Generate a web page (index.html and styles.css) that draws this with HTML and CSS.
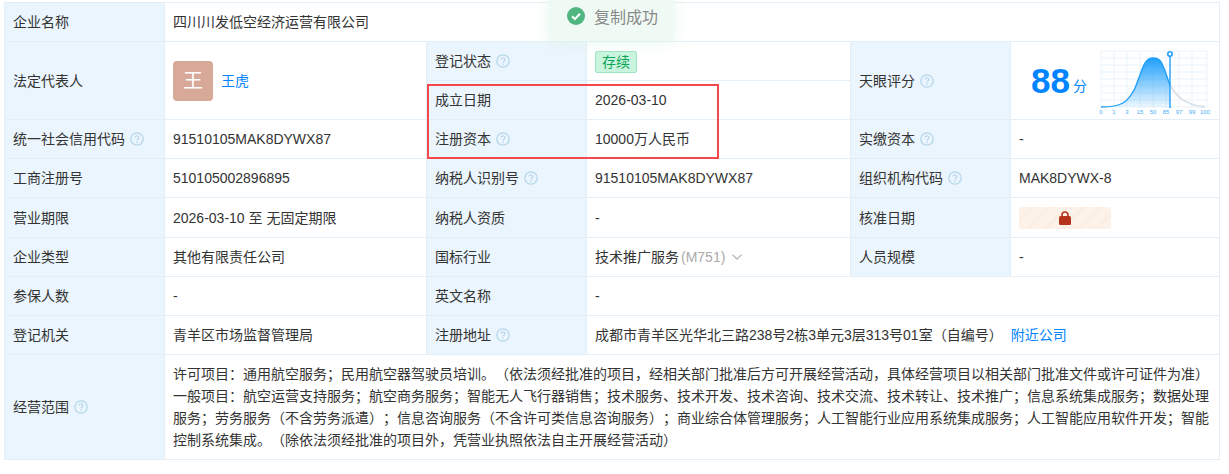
FILE: index.html
```html
<!DOCTYPE html>
<html lang="zh-CN">
<head>
<meta charset="utf-8">
<title>企业信息</title>
<link rel="stylesheet" href="styles.css">
</head>
<body>
<svg class="defs" width="0" height="0" aria-hidden="true">
  <symbol id="q" viewBox="0 0 14 14">
    <circle cx="7" cy="7" r="6.2" fill="none" stroke="#b5d6ea" stroke-width="1.3"/>
    <path d="M5.2 5.6a1.8 1.8 0 1 1 2.9 1.4c-.7.5-1.1.8-1.1 1.6" fill="none" stroke="#b5d6ea" stroke-width="1.2"/>
    <circle cx="7" cy="10.3" r=".8" fill="#b5d6ea"/>
  </symbol>
</svg>
<main class="page">
  <table class="info">
    <colgroup>
      <col class="c-label"><col class="c-val1"><col class="c-label"><col class="c-val2"><col class="c-label"><col class="c-val3">
    </colgroup>
    <tr>
      <th>企业名称</th>
      <td colspan="5">四川川发低空经济运营有限公司</td>
    </tr>
    <tr>
      <th rowspan="2">法定代表人</th>
      <td rowspan="2">
        <div class="person"><span class="avatar">王</span><a class="link">王虎</a></div>
      </td>
      <th>登记状态<svg class="q"><use href="#q"/></svg></th>
      <td><span class="tag">存续</span></td>
      <th rowspan="2">天眼评分<svg class="q"><use href="#q"/></svg></th>
      <td rowspan="2" class="score-cell">
        <div class="score">
          <span class="num">88</span><span class="unit">分</span>
          <svg class="chart" width="112" height="70" viewBox="0 0 112 70">
            <defs>
              <linearGradient id="fill" x1="0" y1="0" x2="0" y2="1">
                <stop offset="0" stop-color="#1f9ffb"/>
                <stop offset="1" stop-color="#1f9ffb" stop-opacity=".08"/>
              </linearGradient>
            </defs>
            <path class="grid" d="M2 5H108M2 12H108M2 19H108M2 26H108M2 33H108M2 40H108M2 47H108M2 54H108M2 61H108M2 5V61M15 5V61M28 5V61M41 5V61M54 5V61M67 5V61M80 5V61M93 5V61M108 5V61"/>
            <path class="tail" d="M71 39C76 48 84 59 106 61"/>
            <path fill="url(#fill)" d="M2 61C12 61 19 60 24 57C29 54 31 51 34 46C37 41 38 36 41 29C44 20 47 12 54 12C60 12 62 15 64 20C67 26 68 32 71 39V61Z"/>
            <path class="curve" d="M2 61C12 61 19 60 24 57C29 54 31 51 34 46C37 41 38 36 41 29C44 20 47 12 54 12C60 12 62 15 64 20C67 26 68 32 71 39"/>
            <path class="pin" d="M71 10V62"/>
            <circle class="pin-head" cx="71" cy="8" r="2.2"/>
            <g class="ticks">
              <text x="2" y="68">0</text><text x="15" y="68">1</text><text x="28" y="68">3</text><text x="41" y="68">15</text><text x="54" y="68">50</text><text x="67" y="68">85</text><text x="80" y="68">97</text><text x="93" y="68">99</text><text x="106" y="68">100</text>
            </g>
          </svg>
        </div>
      </td>
    </tr>
    <tr>
      <th>成立日期</th>
      <td>2026-03-10</td>
    </tr>
    <tr>
      <th>统一社会信用代码<svg class="q"><use href="#q"/></svg></th>
      <td>91510105MAK8DYWX87</td>
      <th>注册资本<svg class="q"><use href="#q"/></svg></th>
      <td>10000万人民币</td>
      <th>实缴资本<svg class="q"><use href="#q"/></svg></th>
      <td>-</td>
    </tr>
    <tr>
      <th>工商注册号</th>
      <td>510105002896895</td>
      <th>纳税人识别号<svg class="q"><use href="#q"/></svg></th>
      <td>91510105MAK8DYWX87</td>
      <th>组织机构代码<svg class="q"><use href="#q"/></svg></th>
      <td>MAK8DYWX-8</td>
    </tr>
    <tr class="tall">
      <th>营业期限</th>
      <td>2026-03-10 至 无固定期限</td>
      <th>纳税人资质</th>
      <td>-</td>
      <th>核准日期</th>
      <td>
        <div class="locked">
          <svg width="12" height="14" viewBox="0 0 12 14"><path d="M3 6V4a3 3 0 0 1 6 0v2" fill="none" stroke="#b5341b" stroke-width="1.6"/><rect y="5" width="12" height="9" rx="1.5" fill="#b5341b"/></svg>
        </div>
      </td>
    </tr>
    <tr>
      <th>企业类型</th>
      <td>其他有限责任公司</td>
      <th>国标行业</th>
      <td>技术推广服务<span class="muted">(M751)</span><svg class="chev" width="10" height="6" viewBox="0 0 10 6"><path d="M.5 .7l4.5 4.5 4.5-4.5" fill="none" stroke="#aaa" stroke-width="1.1"/></svg></td>
      <th>人员规模</th>
      <td>-</td>
    </tr>
    <tr>
      <th>参保人数</th>
      <td>-</td>
      <th>英文名称</th>
      <td colspan="3">-</td>
    </tr>
    <tr>
      <th>登记机关</th>
      <td>青羊区市场监督管理局</td>
      <th>注册地址<svg class="q"><use href="#q"/></svg></th>
      <td colspan="3">成都市青羊区光华北三路238号2栋3单元3层313号01室（自编号）<a class="link nearby">附近公司</a></td>
    </tr>
    <tr class="scope-row">
      <th>经营范围<svg class="q"><use href="#q"/></svg></th>
      <td colspan="5" class="scope">许可项目：通用航空服务；民用航空器驾驶员培训。（依法须经批准的项目，经相关部门批准后方可开展经营活动，具体经营项目以相关部门批准文件或许可证件为准）<br>一般项目：航空运营支持服务；航空商务服务；智能无人飞行器销售；技术服务、技术开发、技术咨询、技术交流、技术转让、技术推广；信息系统集成服务；数据处理服务；劳务服务（不含劳务派遣）；信息咨询服务（不含许可类信息咨询服务）；商业综合体管理服务；人工智能行业应用系统集成服务；人工智能应用软件开发；智能控制系统集成。（除依法须经批准的项目外，凭营业执照依法自主开展经营活动）</td>
    </tr>
  </table>
  <div class="highlight"></div>
  <div class="toast">
    <svg width="18" height="18" viewBox="0 0 18 18"><circle cx="9" cy="9" r="9" fill="#4fb67f"/><path d="M5 9.2l2.9 2.8L13 6.8" fill="none" stroke="#fff" stroke-width="2"/></svg>
    <span>复制成功</span>
  </div>
</main>
</body>
</html>
```

FILE: styles.css
```css
* { box-sizing: border-box; }
html, body { margin: 0; background: #fff; }
body {
  font-family: "Liberation Sans", "Noto Sans CJK SC", sans-serif;
  font-size: 14px;
  color: #333;
  overflow: hidden;
  text-spacing-trim: space-all;
}
.defs { position: absolute; }
.page {
  position: relative;
  width: 1229px;
  height: 474px;
  padding: 2px 10px 0 4px;
}
.info {
  width: 1215px;
  table-layout: fixed;
  border-collapse: collapse;
  line-height: 22px;
}
.c-label { width: 160px; }
.info col.c-val1 { width: 262px; }
.info col.c-val2 { width: 264px; }
.info col.c-val3 { width: 209px; }
.info tr { height: 39px; }
.info tr.tall { height: 40px; }
.info tr.scope-row { height: 105px; }
.info th, .info td {
  border: 1px solid #e4eef6;
  padding: 0 8px;
  text-align: left;
  font-weight: 400;
  vertical-align: middle;
  white-space: nowrap;
}
.info th { background: #ebf5fd; }
.info td.scope { white-space: normal; padding: 8px 8px; line-height: 22px; }
.q { width: 14px; height: 14px; margin-left: 5px; vertical-align: -2px; }
.person { display: flex; align-items: center; gap: 8px; }
.avatar {
  display: flex;
  align-items: center;
  justify-content: center;
  width: 40px;
  height: 40px;
  border-radius: 4px;
  background: #d8a898;
  color: #fff;
  font-size: 20px;
}
.link { color: #0084ff; }
.nearby { margin-left: 8px; }
.tag {
  display: inline-block;
  height: 22px;
  padding: 0 6px;
  line-height: 20px;
  border: 1px solid #9de5c0;
  border-radius: 2px;
  background: #c9f5df;
  color: #0ea55a;
  vertical-align: middle;
}
.score-cell.score-cell { padding: 0; }
.score { display: flex; align-items: center; padding-left: 20px; }
.num { font-size: 35px; font-weight: 700; color: #0084ff; line-height: 40px; }
.unit { color: #0084ff; margin: 10px 0 0 3px; line-height: 20px; }
.chart { margin-left: 12px; }
.grid { stroke: #e9f3fb; stroke-width: 1; fill: none; }
.tail { stroke: #d8e2e8; stroke-width: 1.8; fill: none; }
.curve { stroke: #1f9ffb; stroke-width: 1.4; fill: none; }
.pin { stroke: #1f9ffb; stroke-width: 1.4; }
.pin-head { fill: #fff; stroke: #1f9ffb; stroke-width: 1.6; }
.ticks { font-size: 6px; fill: #49b0f5; text-anchor: middle; }
.locked {
  display: flex;
  align-items: center;
  justify-content: center;
  width: 92px;
  height: 22px;
  border-radius: 2px;
  background: repeating-linear-gradient(135deg, #fdf2ea 0 8px, #fbeee4 8px 12px);
}
.muted { color: #aaa; margin-left: 2px; }
.chev { margin-left: 7px; vertical-align: 2px; }
.highlight {
  position: absolute;
  left: 427px;
  top: 84px;
  width: 292px;
  height: 75px;
  border: 2px solid #f4484d;
  pointer-events: none;
}
.toast {
  position: absolute;
  left: 549px;
  top: 0;
  width: 125px;
  height: 41px;
  padding: 0 0 9px 18px;
  display: flex;
  align-items: center;
  gap: 9px;
  background: #f0faf5;
  box-shadow: 0 0 16px rgba(220, 245, 232, .8);
  color: #888;
  font-size: 16px;
}
```
